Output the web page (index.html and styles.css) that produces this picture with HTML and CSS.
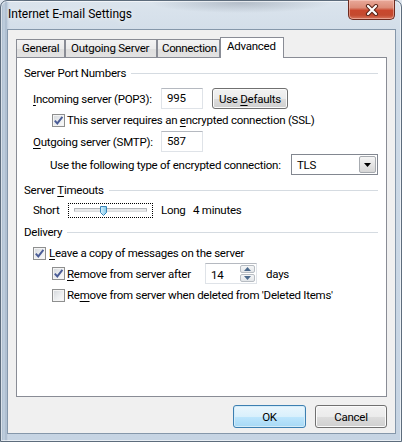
FILE: index.html
```html
<!DOCTYPE html>
<html>
<head>
<meta charset="utf-8">
<title>Internet E-mail Settings</title>
<link rel="stylesheet" href="styles.css">
</head>
<body>
<div class="window">
  <div class="titlebar">
    <span class="title">Internet E-mail Settings</span>
    <div class="close">
      <svg width="14" height="12" viewBox="0 0 14 12">
        <path d="M3 2 L11 10 M11 2 L3 10" stroke="#5a2418" stroke-width="4.2" stroke-linecap="round" fill="none"/>
        <path d="M3 2 L11 10 M11 2 L3 10" stroke="#ffffff" stroke-width="2.2" stroke-linecap="round" fill="none"/>
      </svg>
    </div>
  </div>
  <div class="client">
    <div class="tabs">
      <div class="tab t-general">General</div>
      <div class="tab t-outgoing">Outgoing Server</div>
      <div class="tab t-connection">Connection</div>
      <div class="tab t-advanced active">Advanced</div>
    </div>
    <div class="panel">
      <div class="group gh1"><span>Server Port Numbers</span><div class="rule"></div></div>

      <div class="row r-in">
        <span class="lbl port-lbl"><u>I</u>ncoming server (POP3):</span>
        <div class="textbox port">995</div>
        <div class="btn defaults">Use&nbsp;<u>D</u>efaults</div>
      </div>

      <div class="row r-ssl sub">
        <span class="check on"><svg width="11" height="11" viewBox="0 0 11 11"><path d="M1.8 5.6 L4.3 8.4 L9.4 1.8" stroke="#4a5c96" stroke-width="1.9" fill="none"/></svg></span>
        <span class="ctext">This server requires an <u>e</u>ncrypted connection (SSL)</span>
      </div>

      <div class="row r-out">
        <span class="lbl port-lbl"><u>O</u>utgoing server (SMTP):</span>
        <div class="textbox port">587</div>
      </div>

      <div class="row r-enc">
        <span class="lbl enc-lbl">Use the following type of encrypted connection:</span>
        <div class="select">
          <span class="sel-val">TLS</span>
          <span class="sel-btn"><svg width="7" height="4" viewBox="0 0 7 4"><path d="M0 0 H7 L3.5 4 Z" fill="#000"/></svg></span>
        </div>
      </div>

      <div class="group gh2"><span>Server <u>T</u>imeouts</span><div class="rule"></div></div>

      <div class="row r-slider">
        <span class="lbl short">Short</span>
        <div class="slider">
          <div class="track"></div>
          <svg class="thumb" width="7" height="10" viewBox="0 0 7 10">
            <defs>
              <linearGradient id="tg" x1="0" y1="0" x2="1" y2="0">
                <stop offset="0" stop-color="#d9f1fc"/>
                <stop offset="1" stop-color="#7cc8ec"/>
              </linearGradient>
            </defs>
            <path d="M0.5 0.5 H6.5 V6.5 L3.5 9.5 L0.5 6.5 Z" fill="url(#tg)" stroke="#3c86b8" stroke-width="1"/>
          </svg>
        </div>
        <span class="lbl long">Long</span>
        <span class="lbl">4 minutes</span>
      </div>

      <div class="group gh3"><span>Delivery</span><div class="rule"></div></div>

      <div class="row r-leave">
        <span class="check on"><svg width="11" height="11" viewBox="0 0 11 11"><path d="M1.8 5.6 L4.3 8.4 L9.4 1.8" stroke="#4a5c96" stroke-width="1.9" fill="none"/></svg></span>
        <span class="ctext leave-text"><u>L</u>eave a copy of messages on the server</span>
      </div>

      <div class="row r-remove sub">
        <span class="check on"><svg width="11" height="11" viewBox="0 0 11 11"><path d="M1.8 5.6 L4.3 8.4 L9.4 1.8" stroke="#4a5c96" stroke-width="1.9" fill="none"/></svg></span>
        <span class="ctext remove-text"><u>R</u>emove from server after</span>
        <div class="spin">
          <span class="spin-val">14</span>
          <div class="spin-btns">
            <span class="spin-b"><svg width="7" height="4" viewBox="0 0 7 4"><path d="M0 4 H7 L3.5 0 Z" fill="#4d6a8c"/></svg></span>
            <span class="spin-b"><svg width="7" height="4" viewBox="0 0 7 4"><path d="M0 0 H7 L3.5 4 Z" fill="#4d6a8c"/></svg></span>
          </div>
        </div>
        <span class="lbl days">days</span>
      </div>

      <div class="row r-deleted sub">
        <span class="check"></span>
        <span class="ctext">Re<u>m</u>ove from server when deleted from 'Deleted Items'</span>
      </div>
    </div>
    <div class="buttons">
      <div class="btn default ok">OK</div>
      <div class="btn cancel">Cancel</div>
    </div>
  </div>
</div>
</body>
</html>
```

FILE: styles.css
```css
* { box-sizing: border-box; }
html, body { margin: 0; padding: 0; }
body {
  width: 402px;
  height: 442px;
  overflow: hidden;
  background: #dfe6ee;
  font-family: Roboto, "Noto Sans", "DejaVu Sans", sans-serif;
  font-size: 11.5px;
  letter-spacing: -0.25px;
  color: #000;
}
u { text-decoration: underline; text-underline-offset: 2px; }

.window {
  width: 402px;
  height: 442px;
  display: flex;
  flex-direction: column;
  border: 1px solid #5d6c7c;
  border-radius: 7px 7px 0 0;
  background:
    radial-gradient(ellipse 90px 10px at 240px 2px, rgba(110,120,135,0.35), rgba(110,120,135,0) 100%),
    linear-gradient(90deg, #9fb2c6 0px, #c3d1df 3px, #a8b9cc 5px, #cbd7e4 7px, rgba(203,215,228,0) 9px),
    linear-gradient(180deg, #dbe4ed 0%, #cfdbe7 10%, #c6d4e3 100%);
  box-shadow: inset 0 0 0 1px rgba(255,255,255,0.6);
}

.titlebar {
  height: 28px;
  display: flex;
  justify-content: space-between;
  align-items: flex-start;
  padding-left: 7px;
  padding-right: 6px;
}
.title {
  margin-top: 6px;
  font-size: 12px;
  letter-spacing: 0;
  color: #000;
  text-shadow: 0 0 6px rgba(255,255,255,0.9);
}
.close {
  width: 47px;
  height: 20px;
  margin-top: -1px;
  border: 1px solid #6d2a1e;
  border-top: none;
  border-radius: 0 0 5px 5px;
  background: linear-gradient(180deg, #e9a99a 0%, #dc8c78 40%, #c9472d 55%, #c44a2f 80%, #d8765e 100%);
  box-shadow: inset 0 0 0 1px rgba(255,220,210,0.45);
  display: flex;
  align-items: center;
  justify-content: center;
}

.client {
  margin: 0 5px 7px 6px;
  flex: 1;
  border: 1px solid #8597aa;
  background: #f0f0f0;
  padding: 7px 8px 5px 8px;
  display: flex;
  flex-direction: column;
}

.tabs {
  height: 20px;
  display: flex;
  align-items: flex-end;
  position: relative;
  z-index: 2;
}
.tab {
  height: 18px;
  border: 1px solid #898c95;
  border-bottom: none;
  background: linear-gradient(180deg, #f3f3f3 0%, #ebebeb 50%, #dedede 50%, #e3e3e3 100%);
  padding-left: 5px;
  line-height: 17px;
  white-space: nowrap;
}
.t-general { width: 49px; }
.t-outgoing { width: 92px; }
.t-connection { width: 63px; padding-left: 4px; letter-spacing: -0.35px; }
.t-advanced { width: 64px; }
.tab.active {
  height: 21px;
  margin-bottom: -1px;
  background: #fff;
  padding-left: 6px;
  line-height: 17px;
}

.panel {
  height: 340px;
  border: 1px solid #898c95;
  background: #fff;
  padding: 7px 8px 0 0;
}

.group {
  height: 16px;
  display: flex;
  align-items: center;
  padding-left: 7px;
  white-space: nowrap;
}
.rule {
  flex: 1;
  height: 1px;
  margin-left: 5px;
  margin-top: 1px;
  background: #d5dbe1;
}

.row {
  display: flex;
  align-items: center;
  padding-left: 16px;
  white-space: nowrap;
}
.row > * { flex: none; }
.row.sub { padding-left: 35px; }

.r-in { height: 21px; margin-top: 7px; }
.r-ssl { height: 14px; margin-top: 4px; }
.r-out { height: 21px; margin-top: 4px; }
.r-enc { height: 21px; margin-top: 2px; padding-left: 33px; }
.gh2 { margin-top: 7px; }
.r-slider { height: 16px; margin-top: 4px; }
.gh3 { margin-top: 6px; }
.r-leave { height: 14px; margin-top: 6px; }
.r-remove { height: 21px; margin-top: 3px; }
.r-deleted { height: 14px; margin-top: 4px; }

.port-lbl { width: 128px; }
.enc-lbl { width: 241px; }

.textbox {
  height: 21px;
  border: 1px solid #dfe3e8;
  border-top-color: #b5b9c0;
  background: #fff;
  padding-left: 5px;
  line-height: 19px;
}
.port { width: 42px; }

.btn {
  height: 21px;
  border: 1px solid #707070;
  border-radius: 3px;
  background: linear-gradient(180deg, #f2f2f2 0%, #ebebeb 50%, #dddddd 50%, #cfcfcf 100%);
  box-shadow: inset 0 0 0 1px #fbfbfb;
  display: flex;
  align-items: center;
  justify-content: center;
  color: #000;
  white-space: nowrap;
}
.defaults { width: 76px; margin-left: 9px; }

.check {
  width: 13px;
  height: 13px;
  border: 1px solid #8e8f8f;
  background: linear-gradient(135deg, #d3d6da 0%, #eceef0 55%, #fbfbfb 100%);
  box-shadow: inset 0 0 0 1px #f4f4f4;
  display: flex;
  align-items: center;
  justify-content: center;
}
.ctext { margin-left: 2px; }
.leave-text { margin-left: 3px; }
.remove-text { width: 138px; }

.select {
  width: 87px;
  height: 21px;
  border: 1px solid #828790;
  background: #fff;
  display: flex;
  align-items: center;
  justify-content: space-between;
  padding: 1px 1px 1px 5px;
}
.sel-btn {
  width: 17px;
  height: 17px;
  border: 1px solid #a7abb0;
  border-radius: 2px;
  background: linear-gradient(180deg, #f5f5f5 0%, #e6e6e6 50%, #d6d6d6 100%);
  display: flex;
  align-items: center;
  justify-content: center;
}

.short { width: 35px; }
.slider {
  width: 85px;
  height: 15px;
  border: 1px dotted #000;
  position: relative;
  display: flex;
  align-items: center;
  padding: 0 5px;
}
.track {
  flex: 1;
  height: 4px;
  border: 1px solid #b3b6ba;
  border-bottom-color: #dadcde;
  background: #e7e8e9;
  border-radius: 1px;
}
.thumb {
  position: absolute;
  left: 31px;
  top: 2px;
}
.long { width: 32px; margin-left: 8px; }

.spin {
  width: 52px;
  height: 21px;
  border: 1px solid #dfe3e8;
  border-top-color: #b5b9c0;
  background: #fff;
  display: flex;
  justify-content: space-between;
  padding: 1px;
  padding-left: 5px;
}
.spin-val { line-height: 19px; margin-top: 1px; }
.spin-btns {
  width: 15px;
  display: flex;
  flex-direction: column;
  gap: 1px;
}
.spin-b {
  flex: 1;
  border: 1px solid #b7bcc2;
  border-radius: 2px;
  background: linear-gradient(180deg, #f5f6f7 0%, #e3e6e9 100%);
  display: flex;
  align-items: center;
  justify-content: center;
}
.days { margin-left: 9px; }

.buttons {
  margin-top: 8px;
  height: 23px;
  display: flex;
  justify-content: flex-end;
  gap: 9px;
}
.ok, .cancel { height: 23px; }
.ok { width: 73px; }
.cancel { width: 72px; }
.btn.default {
  border-color: #3c7fb1;
  background: linear-gradient(180deg, #eaf6fd 0%, #d9f0fc 50%, #bee6fd 50%, #a7d9f5 100%);
  box-shadow: inset 0 0 0 1px #d4ecf9;
}
```
